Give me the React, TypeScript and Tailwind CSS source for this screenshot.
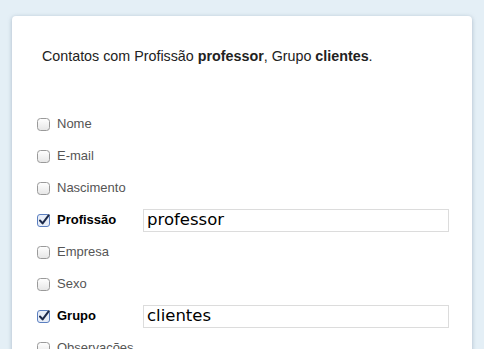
import React from "react";

type Field = { label: string; checked?: boolean; value?: string };

const fields: Field[] = [
  { label: "Nome" },
  { label: "E-mail" },
  { label: "Nascimento" },
  { label: "Profissão", checked: true, value: "professor" },
  { label: "Empresa" },
  { label: "Sexo" },
  { label: "Grupo", checked: true, value: "clientes" },
  { label: "Observações" },
];

function Box({ checked }: { checked?: boolean }) {
  if (checked) {
    return (
      <svg width="13" height="13" viewBox="0 0 13 13" className="shrink-0">
        <rect x="0.5" y="0.5" width="12" height="12" rx="2.5" fill="#e8eef8" stroke="#5b7fc0" />
        <path d="M3 6.5 L5.6 9.4 L11.8 1.2" fill="none" stroke="#1c2a4a" strokeWidth="2" strokeLinecap="round" strokeLinejoin="round" />
      </svg>
    );
  }
  return (
    <svg width="13" height="13" viewBox="0 0 13 13" className="shrink-0">
      <defs>
        <linearGradient id="cb" x1="0" y1="0" x2="0" y2="1">
          <stop offset="0" stopColor="#ffffff" />
          <stop offset="1" stopColor="#e6e6e6" />
        </linearGradient>
      </defs>
      <rect x="0.5" y="0.5" width="12" height="12" rx="3" fill="url(#cb)" stroke="#9a9a9a" />
    </svg>
  );
}

export default function App() {
  return (
    <div className="h-[349px] w-[484px] overflow-hidden bg-[#e4eff6] pl-3 pr-3 pt-4 font-['Liberation_Sans',Arial,sans-serif]">
      <div className="h-[400px] w-[460px] rounded-[4px] bg-white shadow-[0_1px_4px_rgba(120,140,160,0.55)]">
        <p className="pl-[30px] pt-[30px] text-[14.3px] leading-5 text-[#222]">
          Contatos com Profissão <b>professor</b>, Grupo <b>clientes</b>.
        </p>
        <div className="mt-[42px] flex flex-col">
          {fields.map((f) => (
            <div key={f.label} className="flex h-8 items-center pl-[25px]">
              <Box checked={f.checked} />
              <span
                className={
                  f.checked
                    ? "ml-[7px] w-[86px] text-[13px] font-bold text-black"
                    : "ml-[7px] text-[13px] text-[#555]"
                }
              >
                {f.label}
              </span>
              {f.value && (
                <div className="flex h-[23px] w-[306px] items-center border border-[#dcdcdc] pl-[3px] font-['DejaVu_Sans',sans-serif] text-[16.5px] text-black">
                  {f.value}
                </div>
              )}
            </div>
          ))}
        </div>
      </div>
    </div>
  );
}
